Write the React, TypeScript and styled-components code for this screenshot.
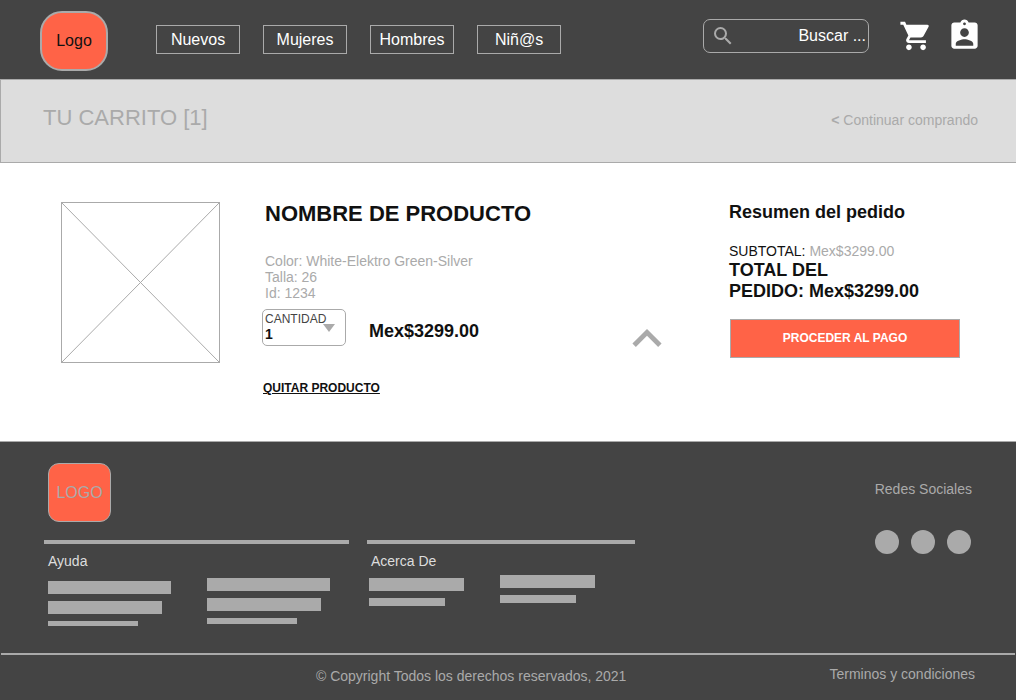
import React from "react";
import styled, { createGlobalStyle } from "styled-components";
import { MdAssignmentInd, MdSearch, MdShoppingCart } from "react-icons/md";

const dark = "#444444";
const line = "#aaaaaa";
const ink = "#111111";
const accent = "#ff6347";

const GlobalStyle = createGlobalStyle`
  *, *::before, *::after { box-sizing: border-box; }
  body {
    margin: 0;
    background: ${dark};
    color: ${ink};
    font-family: "Liberation Sans", Arial, sans-serif;
    font-size: 14px;
    line-height: 16px;
  }
  h1, h2, h3, p { margin: 0; }
  button, input, select { font-family: inherit; }
`;

const Header = styled.header`
  display: flex;
  align-items: flex-start;
  padding: 11px 34px 8px 40px;
  background: ${dark};
`;

const HeaderLogo = styled.a`
  display: flex;
  align-items: center;
  justify-content: center;
  width: 68px;
  height: 60px;
  border: 2px solid ${line};
  border-radius: 22px;
  background: ${accent};
  color: ${ink};
  font-size: 16px;
  text-decoration: none;
`;

const Nav = styled.nav`
  display: flex;
  gap: 23px;
  margin-left: 48px;
  padding-top: 14px;
`;

const NavLink = styled.a`
  display: flex;
  align-items: center;
  justify-content: center;
  width: 84px;
  height: 29px;
  border: 1px solid ${line};
  color: #ffffff;
  font-size: 16px;
  text-decoration: none;
`;

const Tools = styled.div`
  display: flex;
  align-items: flex-end;
  gap: 14px;
  margin-left: auto;
  padding-top: 7px;
`;

const SearchBox = styled.label`
  display: flex;
  align-items: center;
  width: 166px;
  height: 34px;
  margin-right: 16px;
  padding: 0 2px 0 7px;
  border: 1px solid ${line};
  border-radius: 7px;
  color: ${line};

  svg { flex: none; }
`;

const SearchInput = styled.input`
  flex: 1;
  min-width: 0;
  padding: 0;
  border: 0;
  outline: 0;
  background: transparent;
  color: #ffffff;
  font-size: 16px;
  line-height: 18px;
  text-align: right;

  &::placeholder { color: #ffffff; opacity: 1; }
`;

const IconButton = styled.button<{ $color: string }>`
  display: flex;
  padding: 0;
  border: 0;
  background: none;
  color: ${(p) => p.$color};
  cursor: pointer;
`;

const Banner = styled.section`
  display: flex;
  align-items: baseline;
  justify-content: space-between;
  padding: 25px 38px 32px 42px;
  border: 1px solid ${line};
  border-right: 0;
  background: #dddddd;
  color: ${line};
`;

const BannerTitle = styled.h1`
  font-size: 22px;
  font-weight: 400;
  line-height: 25px;
`;

const BannerLink = styled.a`
  color: ${line};
  text-decoration: none;
`;

const Main = styled.main`
  display: flex;
  align-items: flex-start;
  padding: 39px 56px 46px 61px;
  background: #ffffff;
`;

const ProductImage = styled.svg`
  flex: none;
  width: 159px;
  height: 161px;
`;

const Details = styled.section`
  flex: 1;
  margin-left: 42px;
`;

const ProductName = styled.h2`
  padding-left: 3px;
  font-size: 22px;
  line-height: 24px;
`;

const Specs = styled.p`
  margin-top: 27px;
  padding-left: 3px;
  color: ${line};
`;

const PurchaseRow = styled.div`
  display: flex;
  align-items: flex-end;
  margin-top: 8px;
`;

const Quantity = styled.label`
  position: relative;
  display: flex;
  flex-direction: column;
  width: 84px;
  height: 37px;
  padding: 2px;
  border: 1px solid ${line};
  border-radius: 5px;
  color: ${dark};
  font-size: 12px;
  line-height: 14px;
`;

const QuantitySelect = styled.select`
  width: 100%;
  padding: 0;
  border: 0;
  outline: 0;
  appearance: none;
  background: transparent;
  color: ${ink};
  font-size: 14px;
  font-weight: 700;
  line-height: 16px;
`;

const QuantityArrow = styled.svg`
  position: absolute;
  top: 14px;
  right: 10px;
  width: 12px;
  height: 8px;
  pointer-events: none;
`;

const Price = styled.strong`
  margin-left: 23px;
  padding-bottom: 4px;
  font-size: 18px;
  line-height: 21px;
`;

const CollapseSlot = styled.div`
  display: flex;
  flex: 1;
  justify-content: flex-end;
  height: 17px;
`;

const RemoveButton = styled.button`
  margin-top: 35px;
  padding: 0 0 0 1px;
  border: 0;
  background: none;
  color: ${ink};
  font-size: 12px;
  font-weight: 700;
  line-height: 14px;
  text-decoration: underline;
  cursor: pointer;
`;

const Summary = styled.aside`
  display: flex;
  flex-direction: column;
  width: 231px;
  margin-left: 67px;
`;

const SummaryTitle = styled.h2`
  font-size: 18px;
  line-height: 21px;
`;

const Subtotal = styled.p`
  margin: 20px 0 1px;

  span { color: ${line}; }
`;

const Total = styled.p`
  font-size: 18px;
  font-weight: 700;
  line-height: 21px;
`;

const PayButton = styled.button`
  height: 39px;
  margin: 17px 0 0 1px;
  padding: 0 0 2px;
  border: 1px solid ${line};
  background: ${accent};
  color: #ffffff;
  font-size: 12px;
  font-weight: 700;
  cursor: pointer;
`;

const Footer = styled.footer`
  border-top: 1px solid ${line};
  background: ${dark};
  color: ${line};
`;

const FooterTop = styled.div`
  display: flex;
  align-items: flex-start;
  justify-content: space-between;
  padding: 21px 44px 0 48px;
`;

const FooterLogo = styled.a`
  display: flex;
  align-items: center;
  justify-content: center;
  width: 63px;
  height: 59px;
  border: 1px solid ${line};
  border-radius: 11px;
  background: ${accent};
  color: ${line};
  font-size: 16px;
  text-decoration: none;
`;

const Social = styled.div`
  display: flex;
  flex-direction: column;
  align-items: center;
  gap: 33px;
  height: 77px;
  padding-top: 18px;
`;

const Dots = styled.div`
  display: flex;
  gap: 12px;
`;

const Dot = styled.a`
  width: 24px;
  height: 24px;
  border-radius: 50%;
  background: ${line};
`;

const LinkGroups = styled.div`
  display: flex;
  align-items: flex-start;
  gap: 18px;
  padding: 0 44px 27px;
`;

const LinkGroup = styled.section<{ $width: number }>`
  width: ${(p) => p.$width}px;
  border-top: 4px solid ${line};
`;

const GroupTitle = styled.h3`
  margin-top: 9px;
  padding-left: 4px;
  color: #dddddd;
  font-size: 14px;
  font-weight: 400;
`;

const GroupColumns = styled.div<{ $gap: number; $inset: number }>`
  display: flex;
  gap: ${(p) => p.$gap}px;
  padding-left: ${(p) => p.$inset}px;
`;

const BarColumn = styled.div<{ $top: number }>`
  display: flex;
  flex-direction: column;
  gap: 7px;
  padding-top: ${(p) => p.$top}px;
`;

const Bar = styled.div<{ $width: number; $height: number }>`
  width: ${(p) => p.$width}px;
  height: ${(p) => p.$height}px;
  background: ${line};
`;

const Legal = styled.div`
  display: flex;
  align-items: flex-start;
  justify-content: space-between;
  margin: 0 1px;
  padding: 11px 40px 16px 31%;
  border-top: 2px solid ${line};
`;

const Copyright = styled.p`
  padding-top: 2px;
`;

const TermsLink = styled.a`
  color: ${line};
  text-decoration: none;
`;

type BarSize = [width: number, height: number];

function Bars({ top, sizes }: { top: number; sizes: BarSize[] }) {
  return (
    <BarColumn $top={top}>
      {sizes.map(([w, h], i) => (
        <Bar key={i} $width={w} $height={h} />
      ))}
    </BarColumn>
  );
}

export default function App() {
  return (
    <>
      <GlobalStyle />
      <Header>
        <HeaderLogo href="#">Logo</HeaderLogo>
        <Nav>
          {["Nuevos", "Mujeres", "Hombres", "Niñ@s"].map((name) => (
            <NavLink key={name} href="#">{name}</NavLink>
          ))}
        </Nav>
        <Tools>
          <SearchBox>
            <MdSearch size={24} />
            <SearchInput type="text" placeholder="Buscar ..." aria-label="Buscar" />
          </SearchBox>
          <IconButton $color="#ffffff" aria-label="Carrito">
            <MdShoppingCart size={34} />
          </IconButton>
          <IconButton $color="#ffffff" aria-label="Cuenta">
            <MdAssignmentInd size={35} />
          </IconButton>
        </Tools>
      </Header>

      <Banner>
        <BannerTitle>TU CARRITO [1]</BannerTitle>
        <BannerLink href="#"><b>&lt;</b> Continuar comprando</BannerLink>
      </Banner>

      <Main>
        <ProductImage viewBox="0 0 159 161" fill="none" stroke={line} aria-hidden="true">
          <rect x="0.5" y="0.5" width="158" height="160" />
          <path d="M0.5 0.5L158.5 160.5M158.5 0.5L0.5 160.5" />
        </ProductImage>

        <Details>
          <ProductName>NOMBRE DE PRODUCTO</ProductName>
          <Specs>
            Color: White-Elektro Green-Silver<br />
            Talla: 26<br />
            Id: 1234
          </Specs>
          <PurchaseRow>
            <Quantity>
              CANTIDAD
              <QuantitySelect defaultValue="1">
                <option>1</option>
                <option>2</option>
                <option>3</option>
              </QuantitySelect>
              <QuantityArrow viewBox="0 0 12 8" aria-hidden="true">
                <path d="M0 0H12L6 8Z" fill={line} />
              </QuantityArrow>
            </Quantity>
            <Price>Mex$3299.00</Price>
            <CollapseSlot>
              <IconButton $color={line} aria-label="Contraer">
                <svg width="30" height="18" viewBox="6 8 12 7.41" fill="currentColor">
                  <path d="M12 8l-6 6 1.41 1.41L12 10.83l4.59 4.58L18 14z" />
                </svg>
              </IconButton>
            </CollapseSlot>
          </PurchaseRow>
          <RemoveButton>QUITAR PRODUCTO</RemoveButton>
        </Details>

        <Summary>
          <SummaryTitle>Resumen del pedido</SummaryTitle>
          <Subtotal>SUBTOTAL: <span>Mex$3299.00</span></Subtotal>
          <Total>TOTAL DEL PEDIDO:&nbsp;Mex$3299.00</Total>
          <PayButton>PROCEDER AL PAGO</PayButton>
        </Summary>
      </Main>

      <Footer>
        <FooterTop>
          <FooterLogo href="#">LOGO</FooterLogo>
          <Social>
            <p>Redes Sociales</p>
            <Dots>
              <Dot href="#" aria-label="Facebook" />
              <Dot href="#" aria-label="Instagram" />
              <Dot href="#" aria-label="Twitter" />
            </Dots>
          </Social>
        </FooterTop>

        <LinkGroups>
          <LinkGroup $width={305}>
            <GroupTitle>Ayuda</GroupTitle>
            <GroupColumns $gap={36} $inset={4}>
              <Bars top={12} sizes={[[123, 13], [114, 13], [90, 5]]} />
              <Bars top={9} sizes={[[123, 13], [114, 13], [90, 6]]} />
            </GroupColumns>
          </LinkGroup>
          <LinkGroup $width={268}>
            <GroupTitle>Acerca De</GroupTitle>
            <GroupColumns $gap={36} $inset={2}>
              <Bars top={9} sizes={[[95, 13], [76, 8]]} />
              <Bars top={6} sizes={[[95, 13], [76, 8]]} />
            </GroupColumns>
          </LinkGroup>
        </LinkGroups>

        <Legal>
          <Copyright>© Copyright Todos los derechos reservados, 2021</Copyright>
          <TermsLink href="#">Terminos y condiciones</TermsLink>
        </Legal>
      </Footer>
    </>
  );
}
